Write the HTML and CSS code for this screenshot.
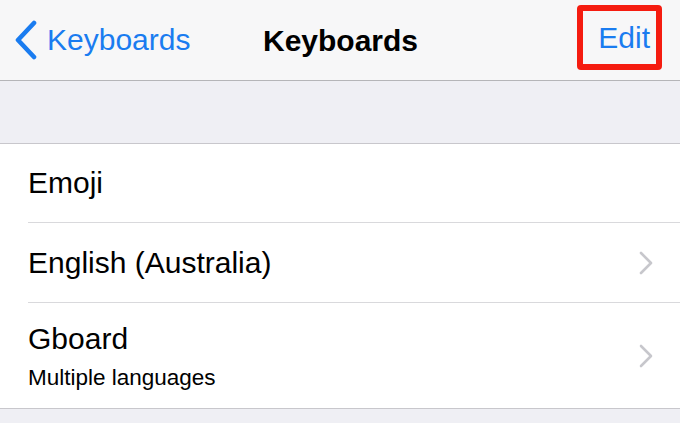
FILE: index.html
```html
<!DOCTYPE html>
<html>
<head>
<meta charset="utf-8">
<link rel="stylesheet" href="styles.css">
</head>
<body>
<div class="screen">
  <header class="nav">
    <div class="back">
      <svg class="back-icon" width="22" height="40" viewBox="0 0 22 40"><polyline points="19,3 3,20 19,37" fill="none" stroke="#1a7cf0" stroke-width="4.6" stroke-linecap="round" stroke-linejoin="round"/></svg>
      <span>Keyboards</span>
    </div>
    <div class="title">Keyboards</div>
    <div class="edit"><span>Edit</span></div>
  </header>
  <div class="gap"></div>
  <ul class="list">
    <li class="row r1"><div class="label">Emoji</div></li>
    <li class="row r2"><div class="label">English (Australia)</div>
      <svg class="chev" width="14" height="24" viewBox="0 0 14 24"><polyline points="2,2 12,12 2,22" fill="none" stroke="#c7c7cc" stroke-width="2.6" stroke-linecap="round" stroke-linejoin="round"/></svg>
    </li>
    <li class="row r3"><div class="texts"><div class="label">Gboard</div><div class="sub">Multiple languages</div></div>
      <svg class="chev" width="14" height="24" viewBox="0 0 14 24"><polyline points="2,2 12,12 2,22" fill="none" stroke="#c7c7cc" stroke-width="2.6" stroke-linecap="round" stroke-linejoin="round"/></svg>
    </li>
  </ul>
  <div class="bottom"></div>
</div>
</body>
</html>
```
FILE: styles.css
```css
* { box-sizing: border-box; }
html, body { margin: 0; padding: 0; }
body {
  width: 680px;
  height: 423px;
  overflow: hidden;
  font-family: "Liberation Sans", Arial, sans-serif;
  background: #efeff4;
  color: #000;
}
.screen { display: flex; flex-direction: column; height: 423px; }
.nav {
  height: 81px;
  background: #f7f7f8;
  border-bottom: 1px solid #b5b5b8;
  display: flex;
  align-items: center;
  position: relative;
  padding: 0 0 0 15px;
}
.back {
  display: flex;
  align-items: center;
  color: #1a7cf0;
  font-size: 30px;
  gap: 10px;
  margin-top: -1px;
}
.back-icon { display: block; }
.title {
  position: absolute;
  left: 0; right: 0;
  text-align: center;
  font-weight: bold;
  font-size: 30px;
  pointer-events: none;
  top: 24px;
  padding-left: 1px;
}
.edit {
  align-self: flex-start;
  margin: 5px 18px 0 auto;
  width: 85px;
  height: 65px;
  border: 6px solid #f51c10;
  border-radius: 4px;
  display: flex;
  align-items: center;
  justify-content: flex-end;
  padding-right: 6px;
  color: #1a7cf0;
  font-size: 30px;
}
.edit span { margin-top: 1px; }
.gap { height: 63px; border-bottom: 1px solid #c8c7cc; background: #efeff4; }
.list { list-style: none; margin: 0; padding: 0 0 0 28px; background: #fff; border-bottom: 1px solid #c8c7cc; }
.row {
  display: flex;
  align-items: center;
  padding-right: 27px;
  font-size: 30px;
}
.r1, .r2 { border-bottom: 1px solid #d9d9dc; }
.r1 { height: 79px; }
.r2 { height: 80px; }
.r3 { height: 105px; }
.label { flex: 1; }
.texts { flex: 1; display: flex; flex-direction: column; }
.r3 .label { margin-top: 2px; }
.sub { font-size: 22.5px; margin-top: 9px; }
.chev { display: block; }
.bottom { flex: 1; background: #efeff4; }
```
